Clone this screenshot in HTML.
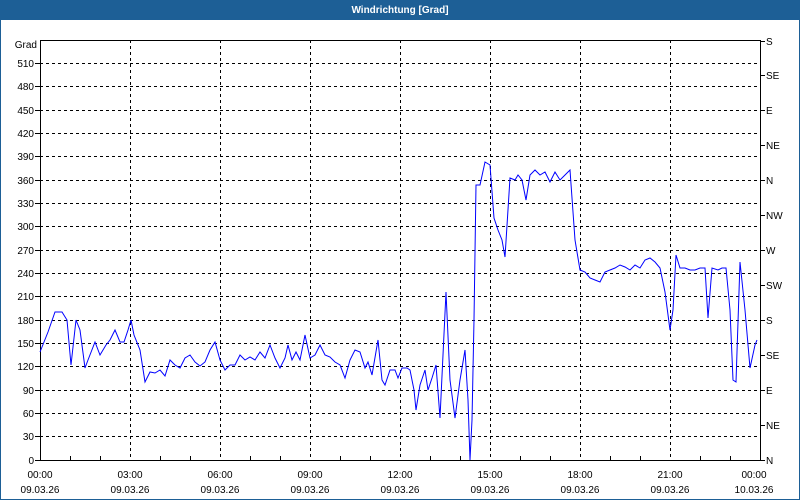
<!DOCTYPE html>
<html><head><meta charset="utf-8"><style>
html,body{margin:0;padding:0;width:800px;height:500px;overflow:hidden;background:#fff}
svg{display:block}
text{font-family:"Liberation Sans",sans-serif;font-size:10px;fill:#000}
</style></head><body>
<svg width="800" height="500" viewBox="0 0 800 500">
<rect x="0" y="0" width="800" height="500" fill="#fff"/>
<rect x="0" y="0" width="800" height="20" fill="#1d5f96"/>
<rect x="0" y="0" width="1" height="500" fill="#1d5f96"/>
<rect x="799" y="0" width="1" height="500" fill="#1d5f96"/>
<rect x="0" y="499" width="800" height="1" fill="#1d5f96"/>
<text x="400" y="13" text-anchor="middle" style="fill:#fff;font-weight:bold;font-size:10px">Windrichtung [Grad]</text>
<g stroke="#000" stroke-width="1" stroke-dasharray="3,3" fill="none" shape-rendering="crispEdges">
<path d="M40 63.5H760M40 86.5H760M40 110.5H760M40 133.5H760M40 156.5H760M40 180.5H760M40 203.5H760M40 226.5H760M40 250.5H760M40 273.5H760M40 296.5H760M40 320.5H760M40 343.5H760M40 366.5H760M40 390.5H760M40 413.5H760M40 436.5H760"/>
<path d="M130.5 40V460M220.5 40V460M310.5 40V460M400.5 40V460M490.5 40V460M580.5 40V460M670.5 40V460"/>
</g>
<g stroke="#000" fill="none" shape-rendering="crispEdges">
<rect x="40.5" y="40.5" width="720" height="420"/>
<path d="M760 41.5h5M760 75.5h5M760 110.5h5M760 145.5h5M760 180.5h5M760 215.5h5M760 250.5h5M760 285.5h5M760 320.5h5M760 355.5h5M760 390.5h5M760 425.5h5M760 460.5h5"/>
<path d="M70.5 460v-4M100.5 460v-4M160.5 460v-4M190.5 460v-4M250.5 460v-4M280.5 460v-4M340.5 460v-4M370.5 460v-4M430.5 460v-4M460.5 460v-4M520.5 460v-4M550.5 460v-4M610.5 460v-4M640.5 460v-4M700.5 460v-4M730.5 460v-4"/>
<path d="M35 63.5h5M35 86.5h5M35 110.5h5M35 133.5h5M35 156.5h5M35 180.5h5M35 203.5h5M35 226.5h5M35 250.5h5M35 273.5h5M35 296.5h5M35 320.5h5M35 343.5h5M35 366.5h5M35 390.5h5M35 413.5h5M35 436.5h5M35 460.5h5"/>
</g>
<g text-anchor="end">
<text x="37" y="48">Grad</text>
<text x="34" y="67">510</text><text x="34" y="90">480</text><text x="34" y="114">450</text><text x="34" y="137">420</text><text x="34" y="160">390</text><text x="34" y="184">360</text><text x="34" y="207">330</text><text x="34" y="230">300</text><text x="34" y="254">270</text><text x="34" y="277">240</text><text x="34" y="300">210</text><text x="34" y="324">180</text><text x="34" y="347">150</text><text x="34" y="370">120</text><text x="34" y="394">90</text><text x="34" y="417">60</text><text x="34" y="440">30</text><text x="34" y="464">0</text>
</g>
<g>
<text x="766" y="45">S</text><text x="766" y="79">SE</text><text x="766" y="114">E</text><text x="766" y="149">NE</text><text x="766" y="184">N</text><text x="766" y="219">NW</text><text x="766" y="254">W</text><text x="766" y="289">SW</text><text x="766" y="324">S</text><text x="766" y="359">SE</text><text x="766" y="394">E</text><text x="766" y="429">NE</text><text x="766" y="464">N</text>
</g>
<g text-anchor="middle">
<text x="40" y="478">00:00</text><text x="130" y="478">03:00</text><text x="220" y="478">06:00</text><text x="310" y="478">09:00</text><text x="400" y="478">12:00</text><text x="490" y="478">15:00</text><text x="580" y="478">18:00</text><text x="670" y="478">21:00</text><text x="754" y="478">00:00</text>
<text x="40" y="493">09.03.26</text><text x="130" y="493">09.03.26</text><text x="220" y="493">09.03.26</text><text x="310" y="493">09.03.26</text><text x="400" y="493">09.03.26</text><text x="490" y="493">09.03.26</text><text x="580" y="493">09.03.26</text><text x="670" y="493">09.03.26</text><text x="754" y="493">10.03.26</text>
</g>
<polyline fill="none" stroke="#0000ff" stroke-width="1" points="40,352 48,332 55,312 62,312 67,320 71,365 76,320 80,330 85,368 88,360 95,342 100,355 106,345 110,340 115,330 120,342 124,342 128,330 131,320 134,335 140,350 145,382 150,372 155,373 160,370 165,376 170,360 175,365 180,368 185,358 190,355 195,362 200,366 205,362 210,350 215,342 220,360 225,370 230,365 235,365 240,355 245,360 250,357 255,360 260,352 265,358 270,345 275,358 280,368 285,358 288,345 292,360 296,352 300,360 305,335 310,358 315,355 320,345 325,355 330,357 335,362 340,365 345,378 350,360 355,350 360,352 365,368 368,362 372,375 378,340 382,380 385,385 390,370 395,370 398,378 402,368 407,368 410,370 414,390 416,410 420,385 425,370 428,390 432,378 436,365 440,418 446,292 450,380 455,418 460,380 465,350 468,400 470,460 472,420 474,320 476,185 480,185 485,162 490,165 494,218 498,230 502,240 505,257 510,178 515,180 518,175 522,180 526,200 530,175 535,170 540,175 545,172 550,182 555,172 560,180 565,175 570,170 575,240 580,270 585,272 590,278 595,280 600,282 605,272 610,270 615,268 620,265 625,267 630,270 635,265 640,268 645,260 650,258 655,262 660,268 665,292 670,330 673,310 676,255 680,268 685,268 690,270 695,270 700,268 705,268 708,318 712,268 718,270 722,268 726,268 730,310 733,380 736,382 740,262 745,310 750,368 755,345 757,340"/>
</svg>
</body></html>
